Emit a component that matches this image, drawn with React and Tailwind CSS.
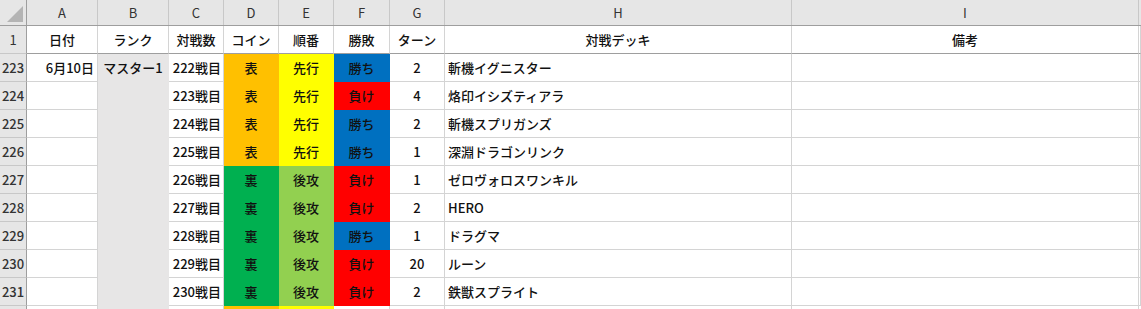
import React from 'react';

// 列幅 (px) — 行番号, A..I
const letters = ['A', 'B', 'C', 'D', 'E', 'F', 'G', 'H', 'I'];
const headers = ['日付', 'ランク', '対戦数', 'コイン', '順番', '勝敗', 'ターン', '対戦デッキ', '備考'];

const coin = {
  表: 'bg-[#ffc000] border-[#ffc000]',
  裏: 'bg-[#00b050] border-[#00b050]',
};
const order = {
  先行: 'bg-[#ffff00] border-[#ffff00]',
  後攻: 'bg-[#92d050] border-[#92d050]',
};
const result = {
  勝ち: 'bg-[#0070c0] border-[#0070c0]',
  負け: 'bg-[#ff0000] border-[#ff0000]',
};

const rows = [
  { n: 223, date: '6月10日', rank: 'マスター1', no: '222戦目', coin: '表', order: '先行', res: '勝ち', turn: '2', deck: '斬機イグニスター' },
  { n: 224, no: '223戦目', coin: '表', order: '先行', res: '負け', turn: '4', deck: '烙印イシズティアラ' },
  { n: 225, no: '224戦目', coin: '表', order: '先行', res: '勝ち', turn: '2', deck: '斬機スプリガンズ' },
  { n: 226, no: '225戦目', coin: '表', order: '先行', res: '勝ち', turn: '1', deck: '深淵ドラゴンリンク' },
  { n: 227, no: '226戦目', coin: '裏', order: '後攻', res: '負け', turn: '1', deck: 'ゼロヴォロスワンキル' },
  { n: 228, no: '227戦目', coin: '裏', order: '後攻', res: '負け', turn: '2', deck: 'HERO' },
  { n: 229, no: '228戦目', coin: '裏', order: '後攻', res: '勝ち', turn: '1', deck: 'ドラグマ' },
  { n: 230, no: '229戦目', coin: '裏', order: '後攻', res: '負け', turn: '20', deck: 'ルーン' },
  { n: 231, no: '230戦目', coin: '裏', order: '後攻', res: '負け', turn: '2', deck: '鉄獣スプライト' },
];

const gridCols = 'grid grid-cols-[27px_71px_71px_55px_55px_55px_56px_55px_347px_347px_1fr]';
const font = { fontFamily: '"Noto Sans CJK JP", "Noto Sans", sans-serif' };

const Cell = ({ className = '', children }) => (
  <div className={`h-[28px] border-r border-b flex items-center whitespace-nowrap overflow-hidden ${className}`}>
    {children}
  </div>
);

const RowHead = ({ children }) => (
  <div className="h-[28px] bg-[#e6e6e6] border-r border-[#9e9e9e] border-b border-b-[#c8c8c8] flex items-center justify-center text-[#333]">
    {children}
  </div>
);

const App = () => {
  return (
    <div className="w-[1141px] h-[309px] overflow-hidden bg-white text-[13px] text-[#111]" style={font}>
      {/* 列見出し */}
      <div className={`${gridCols} h-[26px] bg-[#e6e6e6] border-b border-[#9e9e9e] text-[#333]`}>
        <div className="border-r border-[#9e9e9e] relative">
          <svg width="27" height="25" className="absolute left-0 top-0">
            <polygon points="7,22 23,6 23,22" fill="#b4b4b4" />
          </svg>
        </div>
        {letters.map((l) => (
          <div key={l} className="border-r border-[#c8c8c8] flex items-center justify-center">
            {l}
          </div>
        ))}
        <div />
      </div>

      {/* 1行目: 項目名 */}
      <div className={gridCols}>
        <RowHead>1</RowHead>
        {headers.map((h) => (
          <Cell key={h} className="justify-center font-medium border-r-[#d4d4d4] border-b-[#9e9e9e]">
            {h}
          </Cell>
        ))}
        <Cell className="border-r-[#d4d4d4] border-b-[#9e9e9e]" />
      </div>

      {/* データ行 */}
      {rows.map((r) => (
        <div key={r.n} className={`${gridCols} font-medium`}>
          <RowHead>{r.n}</RowHead>
          <Cell className="justify-end pr-[3px] border-[#d4d4d4]">{r.date}</Cell>
          <Cell className="justify-center bg-[#e7e6e6] border-[#e7e6e6]">{r.rank}</Cell>
          <Cell className="justify-end pr-[2px] border-[#d4d4d4]">{r.no}</Cell>
          <Cell className={`justify-center ${coin[r.coin]}`}>{r.coin}</Cell>
          <Cell className={`justify-center ${order[r.order]}`}>{r.order}</Cell>
          <Cell className={`justify-center ${result[r.res]}`}>{r.res}</Cell>
          <Cell className="justify-center border-[#d4d4d4]">{r.turn}</Cell>
          <Cell className="pl-[3px] border-[#d4d4d4]">{r.deck}</Cell>
          <Cell className="border-[#d4d4d4]" />
          <Cell className="border-[#d4d4d4]" />
        </div>
      ))}

      {/* 232行目 (一部のみ表示) */}
      <div className={`${gridCols} h-[3px]`}>
        <div className="bg-[#e6e6e6] border-r border-[#9e9e9e]" />
        <div className="border-r border-[#d4d4d4]" />
        <div className="bg-[#e7e6e6]" />
        <div className="border-r border-[#d4d4d4]" />
        <div className="bg-[#ffc000]" />
        <div className="bg-[#ffff00]" />
        <div className="border-r border-[#d4d4d4]" />
        <div className="border-r border-[#d4d4d4]" />
        <div className="border-r border-[#d4d4d4]" />
        <div className="border-r border-[#d4d4d4]" />
        <div />
      </div>
    </div>
  );
};

export default App;
